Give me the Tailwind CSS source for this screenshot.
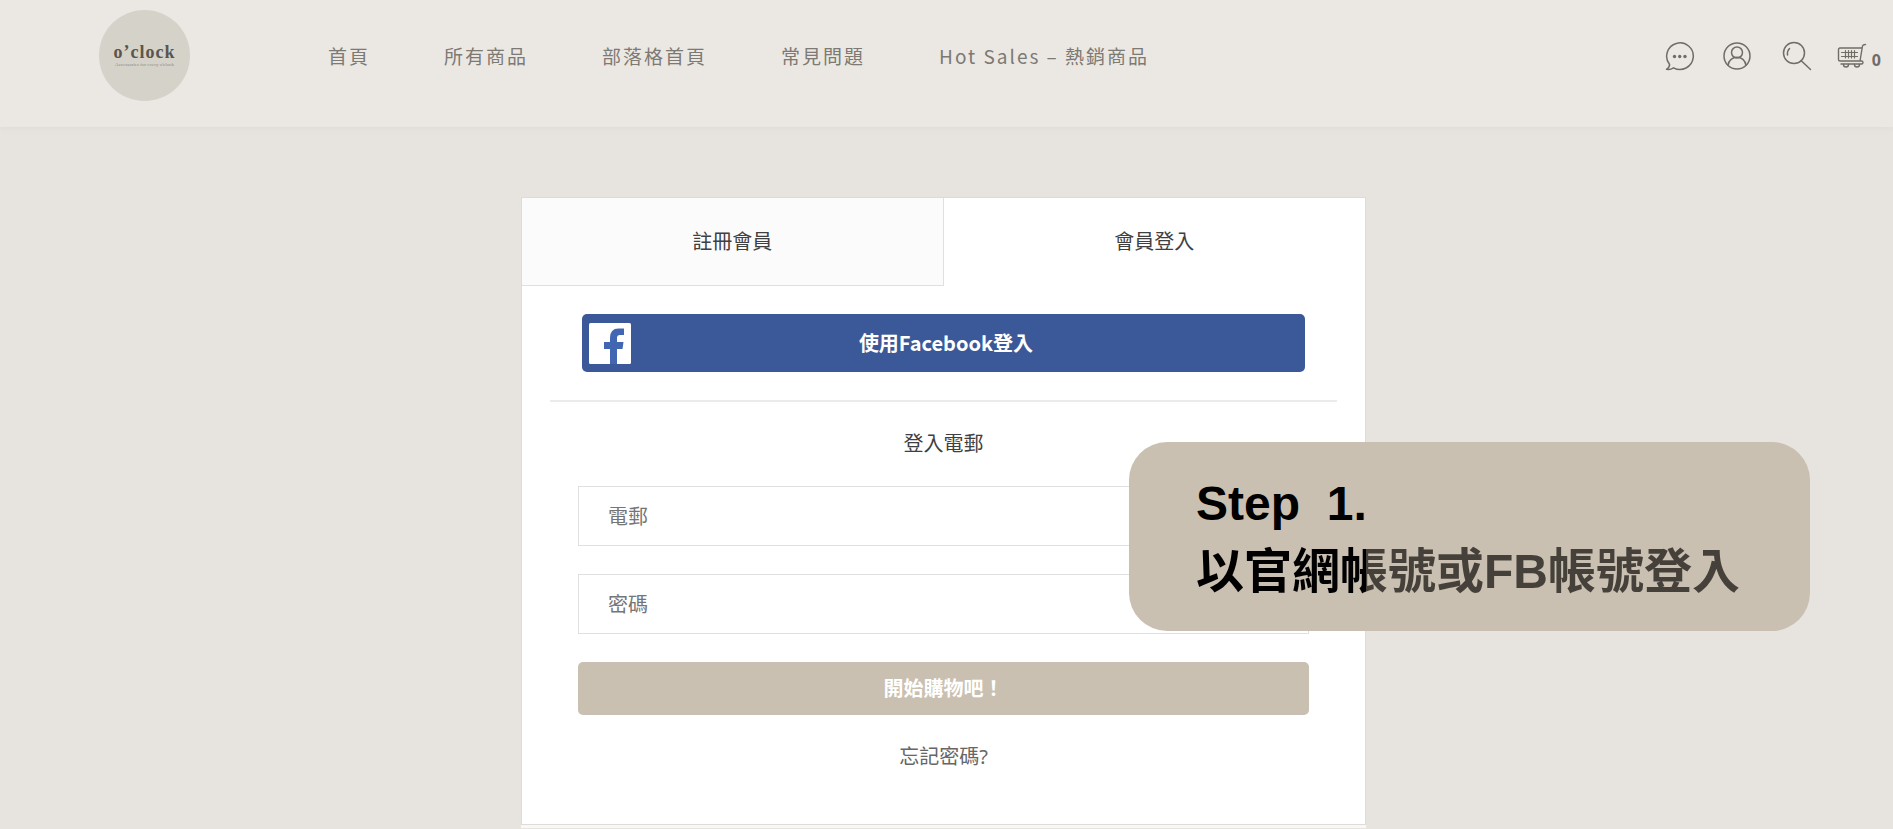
<!DOCTYPE html>
<html lang="zh-Hant">
<head>
<meta charset="utf-8">
<meta name="viewport" content="width=device-width, initial-scale=1">
<title>o'clock 會員登入</title>
<script src="https://cdn.jsdelivr.net/npm/@tailwindcss/browser@4"></script>
</head>
<body class="min-h-screen overflow-x-hidden bg-[#e7e4df] text-[#404040] font-['Noto_Sans','Noto_Sans_CJK_TC',sans-serif]">
<header class="flex items-start bg-[#ebe8e3] shadow-[0_2px_6px_#dfdcd6] pt-[10px] pb-[26px] pl-[99px] pr-3">
  <a href="#" class="flex h-[91px] w-[91px] shrink-0 flex-col items-center justify-center rounded-full bg-[#d5d2c9] pb-[2px] font-['Liberation_Serif',serif] text-[#5a564f]">
    <span class="text-[18px] leading-[20px] font-bold tracking-[1px]">o’clock</span>
    <span class="text-[5px] leading-[6px] text-[#8d8981]">Accessories for every o'clock</span>
  </a>
  <nav class="ml-[138px] mt-[32px] flex gap-[74px] whitespace-nowrap font-['Noto_Sans_CJK_TC',sans-serif] text-[19px] leading-[28px] tracking-[2px] text-[#7d7973]">
    <a href="#">首頁</a>
    <a href="#">所有商品</a>
    <a href="#">部落格首頁</a>
    <a href="#">常見問題</a>
    <a href="#">Hot Sales – 熱銷商品</a>
  </nav>
  <div class="ml-auto mt-[30px] flex items-center text-[#706c66]">
    <button aria-label="訊息" class="mr-7"><svg width="30" height="30" viewBox="0 0 30 30" fill="none" stroke="currentColor" stroke-width="1.5" stroke-linejoin="round"><path d="M4.600 23.500A13.300 13.300 0 1 1 8.500 26.800C6.500 28.200 4 28.700 1.500 28.300C3.500 27 4.600 25.500 4.600 23.500Z"/><g fill="currentColor" stroke="none"><circle cx="9.500" cy="15.500" r="1.700"/><circle cx="14.700" cy="15.500" r="1.700"/><circle cx="20" cy="15.500" r="1.700"/></g></svg></button>
    <button aria-label="會員" class="mr-[31px]"><svg width="28" height="28" viewBox="0 0 28 28" fill="none" stroke="currentColor" stroke-width="1.500"><circle cx="14" cy="14" r="13"/><circle cx="14" cy="10.500" r="5.500"/><path d="M5 23.500C6 12.500 22 12.500 23 23.500"/></svg></button>
    <button aria-label="搜尋" class="mr-[25px]"><svg width="30" height="30" viewBox="0 0 30 30" fill="none" stroke="currentColor" stroke-width="1.500" stroke-linecap="round"><circle cx="12" cy="12" r="10.500"/><path d="M5.500 14Q5 10 7.500 7.500"/><path d="M19 19.500L28.500 28.500"/></svg></button>
    <button aria-label="購物車" class="flex items-center gap-[5px]"><svg width="30" height="28" viewBox="0 0 30 28" fill="none" stroke="currentColor" stroke-width="1.400" stroke-linecap="round" stroke-linejoin="round"><path d="M24.500 6H3Q1.500 6 1.500 7.500V17.500Q1.500 19 3 19H24.500Q26 19 26 20.500T24.500 22H4M23 19L25.500 4Q26 2.500 28.500 2.500"/><path d="M4.500 10.500H20.500M4.500 14.500H20.500M8.500 8.500V16M11.500 8.500V16M14.500 8.500V16M17.500 8.500V16" stroke-width="1.200"/><path d="M6.500 22.500a2.500 2.500 0 0 0 5 0M17.500 22.500a2.500 2.500 0 0 0 5 0"/></svg><span class="pt-2 text-base leading-6 font-bold">0</span></button>
  </div>
</header>

<main class="flex justify-center pt-[70px] pr-[6px]">
  <div class="relative w-full max-w-[845px]">
    <section class="border border-[#dedcd8] bg-white text-xl leading-7">
      <div class="grid grid-cols-2" role="tablist">
        <button role="tab" aria-selected="false" class="h-[88px] border-r border-b border-[#e0e0e0] bg-[#fbfbfb]">註冊會員</button>
        <button role="tab" aria-selected="true" class="h-[88px] bg-white">會員登入</button>
      </div>
      <form class="flex flex-col px-7 pt-7 pb-[53px]" onsubmit="return false">
        <button type="button" class="mx-8 flex h-[58px] items-center rounded-[5px] bg-[#3b5998] font-['Noto_Sans_CJK_TC',sans-serif] font-bold text-white">
          <svg class="ml-[7px] shrink-0" width="42" height="41" viewBox="0 0 42 41"><rect width="42" height="41" rx="1.500" fill="#fff"/><path d="M21 41V26H15V19H21V15Q21 5.500 29.500 5.500H35V12H31Q28 12 28 15V19H34.500L33.500 26H28V41Z" fill="#4267b2"/></svg>
          <span class="flex-1 pr-11">使用Facebook登入</span>
        </button>
        <hr class="mt-7 border-t-2 border-[#ebebeb]">
        <p class="mt-[28px] text-center">登入電郵</p>
        <input type="email" aria-label="電郵" placeholder="電郵" class="mx-7 mt-[28px] h-[60px] border border-[#e0e0e0] px-[29px] outline-none placeholder:text-[#757575]">
        <input type="password" aria-label="密碼" placeholder="密碼" class="mx-7 mt-[28px] h-[60px] border border-[#e0e0e0] px-[29px] outline-none placeholder:text-[#757575]">
        <button type="submit" class="mx-7 mt-[28px] h-[53px] rounded-[5px] bg-[#cac0b1] font-bold text-white">開始購物吧！</button>
        <a href="#" class="mt-[28px] self-center text-[#666]">忘記密碼?</a>
      </form>
    </section>
    <div class="h-[3px] bg-[#f8f8f8]"></div>

    <aside class="absolute top-[245px] left-[608px] w-[681px] rounded-[38px] bg-[#cac0b1] pt-[28px] pb-[25px] pl-[67px] font-['Liberation_Sans','Noto_Sans_CJK_TC',sans-serif] text-5xl leading-[68px] font-bold">
      <p class="whitespace-pre text-black">Step  1.</p>
      <p class="w-max whitespace-nowrap bg-linear-to-r from-black from-[170px] to-[#45403a] to-[170px] bg-clip-text text-transparent">以官網帳號或FB帳號登入</p>
    </aside>
  </div>
</main>
</body>
</html>
